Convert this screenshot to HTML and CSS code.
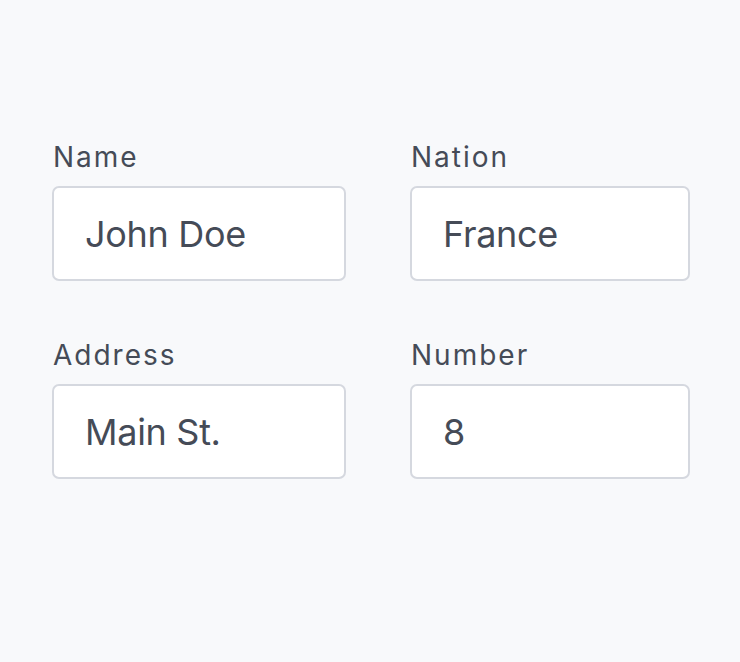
FILE: index.html
```html
<!DOCTYPE html>
<html lang="en">
<head>
<meta charset="utf-8">
<title>Form</title>
<link rel="stylesheet" href="styles.css">
</head>
<body>
<form class="form">
  <div class="field field-wide">
    <label class="label" for="name">Name</label>
    <input class="input" id="name" type="text" value="John Doe" readonly>
  </div>
  <div class="field field-narrow">
    <label class="label" for="nation">Nation</label>
    <input class="input" id="nation" type="text" value="France" readonly>
  </div>
  <div class="field field-wide">
    <label class="label" for="address">Address</label>
    <input class="input" id="address" type="text" value="Main St." readonly>
  </div>
  <div class="field field-narrow">
    <label class="label" for="number">Number</label>
    <input class="input" id="number" type="text" value="8" readonly>
  </div>
</form>
</body>
</html>
```
FILE: styles.css
```css
html, body {
  margin: 0;
  padding: 0;
  background: #f8f9fb;
  height: 100%;
}
body {
  font-family: Inter, "Noto Sans", sans-serif;
  color: #454b57;
}
.form {
  display: grid;
  grid-template-columns: 294px 280px;
  column-gap: 64px;
  row-gap: 53px;
  padding: 136px 0 0 52px;
}
.field {
  display: flex;
  flex-direction: column;
  gap: 8px;
}
.label {
  font-size: 28px;
  line-height: 42px;
  letter-spacing: 2px;
  padding-left: 1px;
  color: #454b57;
}
.input {
  box-sizing: border-box;
  height: 95px;
  width: 100%;
  margin: 0;
  padding: 0 31px;
  border: 2px solid #d5d8df;
  border-radius: 7px;
  background: #ffffff;
  font-family: Inter, "Noto Sans", sans-serif;
  font-size: 36px;
  letter-spacing: -0.3px;
  color: #454b57;
  outline: none;
}
```
